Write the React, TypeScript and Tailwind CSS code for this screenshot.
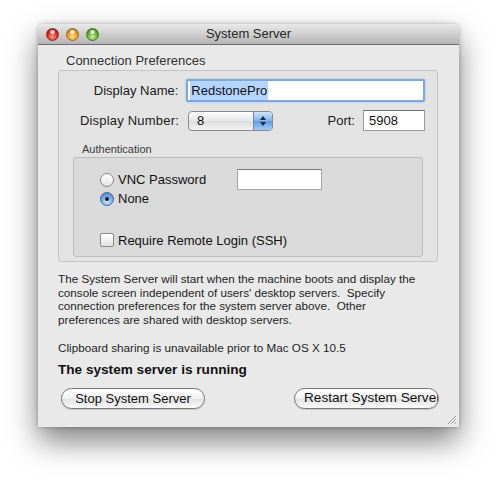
import React from 'react';

const FONT = { fontFamily: '"Liberation Sans", Arial, sans-serif' };

function Light({ color }: { color: 'red' | 'yellow' | 'green' }) {
  const cls =
    color === 'red'
      ? 'bg-[radial-gradient(circle_at_50%_70%,#ff9a8e,#d6231b_55%,#8e1410)] border-[#8a2a24]'
      : color === 'yellow'
        ? 'bg-[radial-gradient(circle_at_50%_70%,#ffe08a,#e0961b_55%,#9a5c0e)] border-[#9a6a2a]'
        : 'bg-[radial-gradient(circle_at_50%_70%,#c8f59a,#5aa82a_55%,#2d6a12)] border-[#3f7a2a]';
  return (
    <div className={`relative h-[13px] w-[13px] rounded-full border ${cls}`}>
      <div className="absolute left-[3px] top-[1px] h-[4px] w-[5px] rounded-full bg-white/70" />
    </div>
  );
}

function Radio({ checked }: { checked?: boolean }) {
  return checked ? (
    <div className="flex h-[14px] w-[14px] items-center justify-center rounded-full border border-[#4a6a9a] bg-[radial-gradient(circle_at_50%_75%,#cfe6ff,#6fa4e4_55%,#3f77c6)]">
      <div className="h-[4px] w-[4px] rounded-full bg-[#1a1a1a]" />
    </div>
  ) : (
    <div className="h-[14px] w-[14px] rounded-full border border-[#8a8a8a] bg-[linear-gradient(#ffffff,#e4e4e4)]" />
  );
}

export default function App() {
  return (
    <div className="h-[480px] w-[497px] bg-white pl-[38px] pt-[24px]" style={FONT}>
      <div className="flex h-[403px] w-[421px] flex-col overflow-hidden rounded-t-[5px] shadow-[0_14px_30px_rgba(0,0,0,0.5),0_0_4px_rgba(0,0,0,0.25)]">
        {/* title bar */}
        <div className="grid h-[21px] grid-cols-[1fr_auto_1fr] items-center border-b border-[#6e6e6e] bg-[linear-gradient(#e9e9e9,#cfcfcf_50%,#b3b3b3)]">
          <div className="flex items-center gap-[7px] pl-[8px]">
            <Light color="red" />
            <Light color="yellow" />
            <Light color="green" />
          </div>
          <div className="text-[13px] text-[#262626]">System Server</div>
          <div />
        </div>

        {/* content */}
        <div className="relative flex flex-1 flex-col bg-[#e9e9e9] px-[20px]">
          <div className="pl-[8px] pt-[8px] text-[13px] leading-[15px] text-[#303030]">Connection Preferences</div>

          <div className="mt-[2px] h-[192px] w-[380px] rounded-[3px] border border-[#c4c4c4] bg-[#e3e3e3] pr-[12px] pt-[8px]">
            {/* display name */}
            <div className="flex items-center">
              <div className="w-[120px] text-right text-[13px] text-[#1a1a1a]">Display Name:</div>
              <div className="ml-[8px] flex h-[23px] w-[240px] items-center rounded-[2px] border-2 border-[#7ea7de] bg-white pl-[2px] shadow-[0_0_2px_#8fb6ea]">
                <span className="bg-[#b5d5ff] px-[1px] text-[13px] text-[#111]">RedstonePro</span>
              </div>
            </div>

            {/* display number + port */}
            <div className="mt-[8px] flex items-center">
              <div className="w-[120px] text-right text-[13px] tracking-[0.2px] text-[#1a1a1a]">Display Number:</div>
              <div className="ml-[9px] flex h-[20px] w-[85px] overflow-hidden rounded-[4px] border border-[#8a8a8a] bg-[linear-gradient(#ffffff,#e6e6e6_50%,#dcdcdc_51%,#f4f4f4)]">
                <div className="flex-1 pl-[8px] text-[13px] leading-[18px] text-[#111]">8</div>
                <div className="flex w-[19px] flex-col items-center justify-center gap-[2px] border-l border-[#6b8ab8] bg-[linear-gradient(#cfe3fb,#7fb0ec_50%,#5f98e2_51%,#a6cdf7)]">
                  <svg width="6" height="4" viewBox="0 0 6 4"><path d="M3 0L6 4H0z" fill="#1b2a44" /></svg>
                  <svg width="6" height="4" viewBox="0 0 6 4"><path d="M0 0h6L3 4z" fill="#1b2a44" /></svg>
                </div>
              </div>
              <div className="ml-auto text-[13px] text-[#1a1a1a]">Port:</div>
              <div className="ml-[8px] flex h-[21px] w-[62px] items-center border border-[#9a9a9a] border-t-[#6f6f6f] bg-white pl-[5px] text-[13px] text-[#111]">
                5908
              </div>
            </div>

            {/* authentication */}
            <div className="mt-[12px] pl-[23px] text-[11px] leading-[13px] text-[#3a3a3a]">Authentication</div>
            <div className="ml-[14px] mt-[1px] flex h-[100px] w-[350px] flex-col rounded-[3px] border border-[#bcbcbc] bg-[#dadada] pl-[26px] pt-[11px]">
              <div className="flex items-center">
                <Radio />
                <span className="ml-[4px] text-[13px] text-[#111]">VNC Password</span>
                <div className="ml-[31px] h-[21px] w-[85px] border border-[#a6a6a6] border-t-[#7a7a7a] bg-white" />
              </div>
              <div className="mt-[-1px] flex items-center">
                <Radio checked />
                <span className="ml-[4px] text-[13px] text-[#111]">None</span>
              </div>
              <div className="mt-[22px] flex items-center">
                <div className="h-[14px] w-[14px] rounded-[2px] border border-[#8a8a8a] bg-[linear-gradient(#ffffff,#e2e2e2)]" />
                <span className="ml-[4px] text-[13px] text-[#111]">Require Remote Login (SSH)</span>
              </div>
            </div>
          </div>

          {/* description */}
          <div className="mt-[10px] whitespace-nowrap text-[11.7px] leading-[13.7px] text-[#1e1e1e]">
            <p>The System Server will start when the machine boots and display the</p>
            <p>console screen independent of users' desktop servers.&nbsp; Specify</p>
            <p>connection preferences for the system server above.&nbsp; Other</p>
            <p>preferences are shared with desktop servers.</p>
          </div>
          <p className="mt-[14px] text-[11.7px] leading-[14px] text-[#1e1e1e]">Clipboard sharing is unavailable prior to Mac OS X 10.5</p>
          <p className="mt-[7px] text-[13.6px] font-bold leading-[16px] text-[#111]">The system server is running</p>

          {/* buttons */}
          <div className="mt-[10px] flex items-center justify-between pl-[3px]">
            <div className="flex h-[21px] w-[144px] items-center justify-center rounded-full border border-[#777] bg-[linear-gradient(#ffffff,#f0f0f0_50%,#e2e2e2_51%,#fafafa)] text-[13px] text-[#111] shadow-[0_1px_1px_rgba(0,0,0,0.15)]">
              Stop System Server
            </div>
            <div className="flex h-[21px] w-[145px] items-center justify-start overflow-hidden whitespace-nowrap rounded-full border border-[#777] bg-[linear-gradient(#ffffff,#f0f0f0_50%,#e2e2e2_51%,#fafafa)] pl-[9px] text-[13.6px] text-[#111] shadow-[0_1px_1px_rgba(0,0,0,0.15)]">
              Restart System Server
            </div>
          </div>

          {/* resize grip */}
          <svg className="absolute bottom-[2px] right-[2px]" width="11" height="11" viewBox="0 0 11 11">
            <path d="M10 2L2 10M10 5L5 10M10 8L8 10" stroke="#9a9a9a" strokeWidth="1" />
            <path d="M10 3L3 10M10 6L6 10M10 9L9 10" stroke="#ffffff" strokeWidth="1" />
          </svg>
        </div>
      </div>
    </div>
  );
}
